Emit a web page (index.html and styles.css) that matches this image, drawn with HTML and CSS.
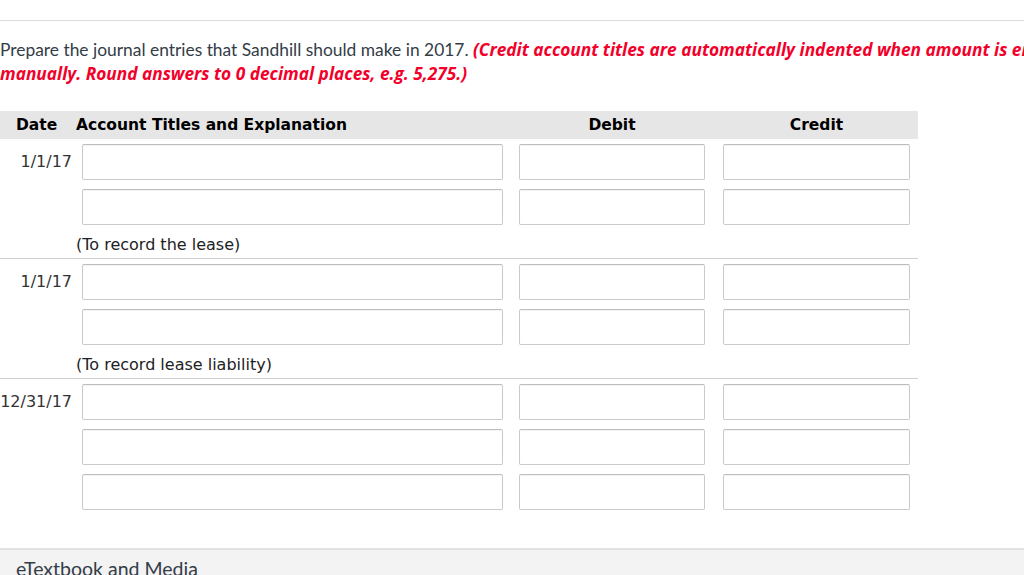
FILE: index.html
```html
<!DOCTYPE html>
<html>
<head>
<meta charset="utf-8">
<link rel="stylesheet" href="styles.css">
</head>
<body>
<div class="page">
  <div class="rule-top"></div>
  <p class="prompt">Prepare the journal entries that Sandhill should make in 2017. <em class="note">(Credit account titles are automatically indented when amount is entered. Do not indent manually. Round answers to 0 decimal places, e.g. 5,275.)</em></p>

  <div class="journal">
    <div class="head">
      <div class="c-date">Date</div>
      <div class="c-acct">Account Titles and Explanation</div>
      <div class="c-debit">Debit</div>
      <div class="c-credit">Credit</div>
    </div>

    <div class="entry">
      <div class="row"><div class="c-date">1/1/17</div><div class="c-acct"><input class="field"></div><div class="c-debit"><input class="field"></div><div class="c-credit"><input class="field"></div></div>
      <div class="row"><div class="c-date"></div><div class="c-acct"><input class="field"></div><div class="c-debit"><input class="field"></div><div class="c-credit"><input class="field"></div></div>
      <div class="desc">(To record the lease)</div>
    </div>

    <div class="entry">
      <div class="row"><div class="c-date">1/1/17</div><div class="c-acct"><input class="field"></div><div class="c-debit"><input class="field"></div><div class="c-credit"><input class="field"></div></div>
      <div class="row"><div class="c-date"></div><div class="c-acct"><input class="field"></div><div class="c-debit"><input class="field"></div><div class="c-credit"><input class="field"></div></div>
      <div class="desc">(To record lease liability)</div>
    </div>

    <div class="entry last">
      <div class="row"><div class="c-date">12/31/17</div><div class="c-acct"><input class="field"></div><div class="c-debit"><input class="field"></div><div class="c-credit"><input class="field"></div></div>
      <div class="row"><div class="c-date"></div><div class="c-acct"><input class="field"></div><div class="c-debit"><input class="field"></div><div class="c-credit"><input class="field"></div></div>
      <div class="row"><div class="c-date"></div><div class="c-acct"><input class="field"></div><div class="c-debit"><input class="field"></div><div class="c-credit"><input class="field"></div></div>
    </div>
  </div>

  <div class="footer">eTextbook and Media</div>
</div>
</body>
</html>
```

FILE: styles.css
```css
* { box-sizing: border-box; }
html, body { margin: 0; padding: 0; background: #fff; }
body { overflow: hidden; width: 1024px; height: 575px; }

.page { width: 1024px; padding-top: 20px; overflow: hidden; }

.rule-top { border-top: 1px solid #dcdcdc; height: 0; }

.prompt {
  margin: 17px 0 0 0;
  font-family: Lato, "Open Sans", sans-serif;
  font-size: 17.4px;
  line-height: 24px;
  color: #333d47;
  width: 1220px;
}
.note {
  font-family: "Open Sans", Lato, sans-serif;
  font-size: 17.3px;
  font-weight: bold;
  font-style: italic;
  color: #f2002a;
}

.journal {
  width: 918px;
  margin-top: 25px;
  font-family: "DejaVu Sans", Verdana, sans-serif;
  font-size: 16px;
  color: #222;
}

.head {
  display: flex;
  align-items: center;
  height: 28px;
  background: #e6e6e6;
  font-weight: bold;
  font-size: 15.5px;
  color: #000;
}
.head .c-date { width: 76px; padding-left: 16px; }
.head .c-acct { width: 427px; text-align: left; }
.head .c-debit { width: 202px; text-align: center; padding-left: 16px; }
.head .c-credit { width: 213px; text-align: center; padding-left: 18px; padding-right: 8px; }

.entry { border-bottom: 1px solid #cfcfcf; }
.entry.last { border-bottom: none; }

.row {
  display: flex;
  align-items: center;
  height: 45px;
}
.row .c-date {
  width: 82px;
  padding-right: 10px;
  text-align: right;
  color: #333;
}
.row .c-acct { width: 421px; }
.row .c-debit { width: 202px; padding-left: 16px; }
.row .c-credit { width: 213px; padding-left: 18px; padding-right: 8px; }

.field {
  display: block;
  width: 100%;
  height: 36px;
  margin: 0;
  padding: 0 6px;
  border: 1px solid #cacaca;
  border-top-color: #bdbdbd;
  border-radius: 2px;
  background: #fff;
  box-shadow: inset 0 1px 1px rgba(0, 0, 0, 0.05);
  font: inherit;
}
.c-credit .field { width: 187px; }

.desc {
  height: 29px;
  padding-left: 76px;
  line-height: 31px;
  color: #222;
}

.footer {
  margin-top: 34px;
  height: 40px;
  background: #f3f3f3;
  border-top: 2px solid #e2e2e2;
  padding: 7px 0 0 16px;
  font-family: Lato, "Open Sans", sans-serif;
  font-size: 19.5px;
  color: #333d47;
}
```
